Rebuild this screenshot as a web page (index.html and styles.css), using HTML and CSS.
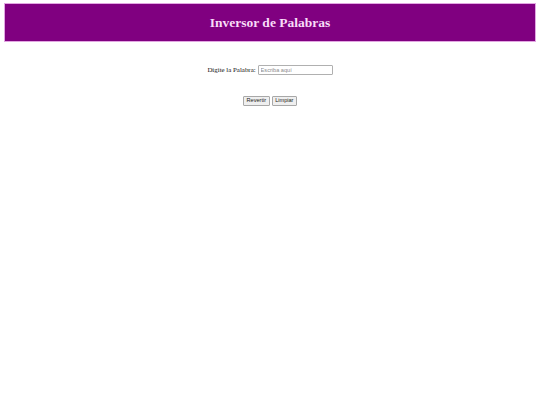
FILE: index.html
```html
<!DOCTYPE html>
<html lang="es">
<head>
<meta charset="utf-8">
<title>Inversor de Palabras</title>
<link rel="stylesheet" href="styles.css">
</head>
<body>
<header class="header">
  <h1 class="title">Inversor de Palabras</h1>
</header>
<main class="content">
  <div class="row">
    <label class="label" for="palabra">Digite la Palabra:</label>
    <input class="field" id="palabra" type="text" placeholder="Escriba aquí">
  </div>
  <div class="actions">
    <button class="btn" type="button">Revertir</button>
    <button class="btn" type="button">Limpiar</button>
  </div>
</main>
</body>
</html>
```

FILE: styles.css
```css
html, body {
  margin: 0;
  padding: 0;
  background: #ffffff;
}

body {
  font-family: "Liberation Serif", "Times New Roman", serif;
  font-size: 6.75px;
  color: #000000;
}

.header {
  margin: 3px 4px 0 4px;
  height: 37px;
  background: #800080;
  border: 1px solid #e2a6e2;
  display: flex;
  align-items: center;
  justify-content: center;
}

.title {
  margin: 0;
  font-family: "Liberation Serif", "Times New Roman", serif;
  font-weight: bold;
  font-size: 13.5px;
  line-height: 1;
  color: #f8dcf8;
}

.content {
  padding-top: 23px;
}

.row {
  display: flex;
  justify-content: center;
  align-items: center;
  gap: 2px;
}

.label {
  font-size: 6.9px;
  line-height: 10px;
  color: #111;
}

.field {
  box-sizing: border-box;
  width: 75px;
  height: 10px;
  margin: 0;
  padding: 0 2px;
  border: 1px solid #b0b0b0;
  border-radius: 1px;
  font-family: "Liberation Sans", Arial, sans-serif;
  font-size: 5.6px;
  color: #000;
  background: #fff;
}

.field::placeholder {
  color: #8a8a8a;
}

.actions {
  margin-top: 21px;
  display: flex;
  justify-content: center;
  gap: 2px;
}

.btn {
  box-sizing: border-box;
  height: 10px;
  margin: 0;
  padding: 0 2.5px;
  border: 1px solid #a8a8a8;
  border-radius: 1px;
  background: #efefef;
  font-family: "Liberation Sans", Arial, sans-serif;
  font-size: 5.6px;
  line-height: 1;
  color: #222;
}
```
